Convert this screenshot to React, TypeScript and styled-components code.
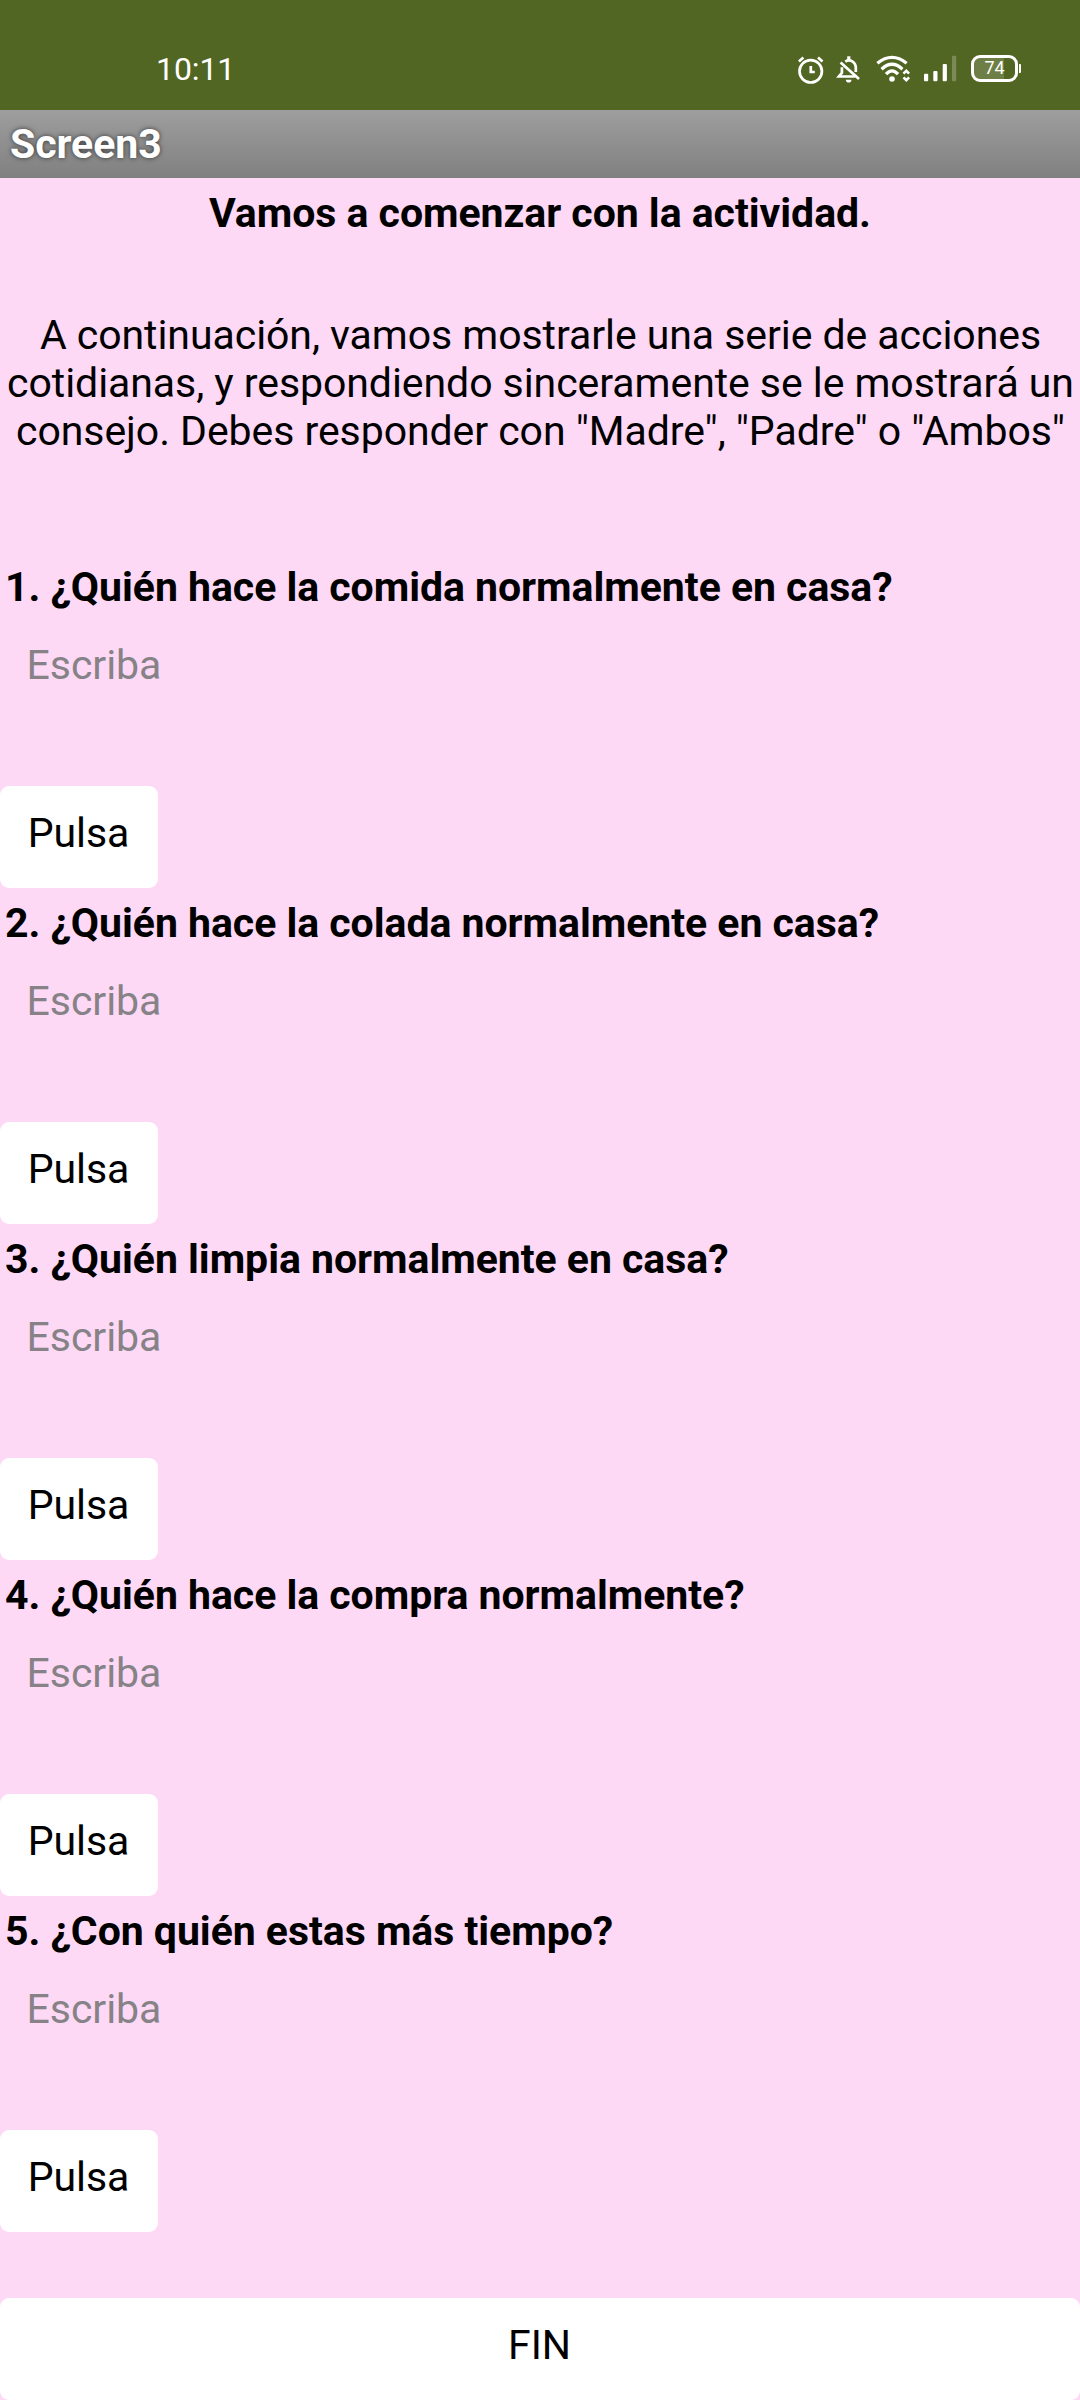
import React from "react";
import styled, { createGlobalStyle } from "styled-components";

const GlobalStyle = createGlobalStyle`
  *, *::before, *::after { box-sizing: border-box; }
  body { margin: 0; background: #fdd9f6; }
`;

const Screen = styled.div`
  display: flex;
  flex-direction: column;
  width: 1080px;
  height: 2400px;
  overflow: hidden;
  background: #fdd9f6;
  color: #000;
  font-family: Roboto, "Liberation Sans", sans-serif;
  font-size: 41px;
  line-height: 48px;
  letter-spacing: -0.04px;
`;

const StatusBar = styled.header`
  display: flex;
  flex: none;
  justify-content: space-between;
  height: 110px;
  padding: 54px 59px 0 156px;
  background: #526623;
  color: #fff;
`;

const Clock = styled.time`
  font-size: 32px;
  line-height: 30px;
  letter-spacing: -0.1px;
`;

const StatusIcons = styled.div`
  display: flex;
  height: 32px;
`;

const Icon = styled.svg<{ $gap?: number }>`
  display: block;
  flex: none;
  height: 32px;
  margin-right: ${({ $gap = 0 }) => $gap}px;
  fill: none;
  stroke: #fff;
  stroke-width: 2.7;
`;

const Battery = styled.div`
  display: flex;
  align-items: center;
  height: 28px;
`;

const BatteryBody = styled.div`
  display: flex;
  align-items: center;
  justify-content: center;
  width: 47px;
  height: 27px;
  border: 3px solid #fff;
  border-radius: 9px;
  background: linear-gradient(90deg, rgba(255, 255, 255, 0.16) 74%, transparent 74%);
  font-size: 18px;
  line-height: 20px;
`;

const BatteryTip = styled.div`
  width: 2px;
  height: 9px;
  margin-left: 1px;
  border-radius: 0 1px 1px 0;
  background: #fff;
`;

const TitleBar = styled.div`
  flex: none;
  height: 68px;
  padding: 10px;
  background: linear-gradient(#9e9e9e, #808080);
  color: #fff;
  font-weight: 700;
  text-shadow: 0 0 5px rgba(0, 0, 0, 0.65);
`;

const Heading = styled.h1`
  margin: 11px 6px 0;
  font-size: inherit;
  font-weight: 700;
  text-align: center;
`;

const Intro = styled.p`
  margin: 74px 0 0;
  padding-left: 1px;
  letter-spacing: -0.06px;
  text-align: center;
  white-space: pre-line;
`;

const QuestionList = styled.main`
  display: flex;
  flex-direction: column;
  margin-top: 108px;
`;

const Question = styled.section`
  display: flex;
  flex-direction: column;
  align-items: flex-start;
  height: 336px;
`;

const QuestionTitle = styled.h2`
  margin: 0 5px;
  font-size: inherit;
  font-weight: 700;
`;

const Answer = styled.input`
  width: 480px;
  height: 48px;
  margin-top: 30px;
  padding: 0 0 0 26.5px;
  border: 0;
  outline: 0;
  background: transparent;
  color: #000;
  font: inherit;
  letter-spacing: inherit;
  &::placeholder { color: #868286; opacity: 1; }
`;

const Button = styled.button<{ $wide?: boolean }>`
  flex: none;
  width: ${({ $wide }) => ($wide ? "1080px" : "158px")};
  height: 102px;
  padding: 0 1px 8px 0;
  border: 0;
  border-radius: 9px;
  background: #fff;
  color: #000;
  font: inherit;
  letter-spacing: inherit;
  text-align: center;
`;

const PressButton = styled(Button)`
  margin-top: 97px;
`;

const FinishButton = styled(Button)`
  margin-top: auto;
`;

const questions = [
  "1. ¿Quién hace la comida normalmente en casa?",
  "2. ¿Quién hace la colada normalmente en casa?",
  "3. ¿Quién limpia normalmente en casa?",
  "4. ¿Quién hace la compra normalmente?",
  "5. ¿Con quién estas más tiempo?",
];

const intro = `A continuación, vamos mostrarle una serie de acciones
cotidianas, y respondiendo sinceramente se le mostrará un
consejo. Debes responder con "Madre", "Padre" o "Ambos"`;

const AlarmIcon = () => (
  <Icon width="30" viewBox="0 0 30 32" $gap={10}>
    <circle cx="14.7" cy="17.3" r="11.2" />
    <path d="M14.8 12v6h4M2.9 7.4 7.4 3.5M22 3.5l4.5 3.9" />
  </Icon>
);

const MutedBellIcon = () => (
  <Icon width="26" viewBox="0 0 26 32" $gap={13}>
    <path d="M4.6 8.6 23 25" />
    <path d="M9.3 7.6C14 4.6 19.8 8 19.8 14v4M5.9 13.2v5.6l-3 3.7h16" />
    <path d="M12.8 2.3v4" strokeWidth="3.2" />
    <path d="M9.9 25.8h5.6a2.8 2.8 0 0 1-5.6 0z" fill="#fff" stroke="none" />
  </Icon>
);

const WifiIcon = () => (
  <Icon width="38" viewBox="0 0 38 32" $gap={11}>
    <path d="M2.4 9.3Q17-2.5 31.6 9.3M6.6 15.2Q17 5.5 27.4 15.2M11 20.2Q17 13.5 23 20.2" strokeWidth="3.3" />
    <circle cx="17" cy="25" r="2.8" fill="#fff" stroke="none" />
    <path d="M28.5 19.6 31.3 16.8 34.1 19.6M28.5 23.4 31.3 26.2 34.1 23.4" />
  </Icon>
);

const SignalIcon = () => (
  <Icon width="34" viewBox="0 0 34 32" $gap={13}>
    <g fill="#fff" stroke="none">
      <rect x="0" y="19.7" width="4.2" height="7.6" rx="1" />
      <rect x="9.3" y="17" width="4.2" height="10.3" rx="1" />
      <rect x="18.7" y="10" width="4.2" height="17.3" rx="1" />
      <rect x="28" y="1.7" width="4.2" height="25.6" rx="1" opacity="0.24" />
    </g>
  </Icon>
);

export default function App() {
  return (
    <Screen>
      <GlobalStyle />
      <StatusBar>
        <Clock>10:11</Clock>
        <StatusIcons>
          <AlarmIcon />
          <MutedBellIcon />
          <WifiIcon />
          <SignalIcon />
          <Battery>
            <BatteryBody>74</BatteryBody>
            <BatteryTip />
          </Battery>
        </StatusIcons>
      </StatusBar>
      <TitleBar>Screen3</TitleBar>
      <Heading>Vamos a comenzar con la actividad.</Heading>
      <Intro>{intro}</Intro>
      <QuestionList>
        {questions.map((text) => (
          <Question key={text}>
            <QuestionTitle>{text}</QuestionTitle>
            <Answer placeholder="Escriba" aria-label={text} />
            <PressButton>Pulsa</PressButton>
          </Question>
        ))}
      </QuestionList>
      <FinishButton $wide>FIN</FinishButton>
    </Screen>
  );
}
